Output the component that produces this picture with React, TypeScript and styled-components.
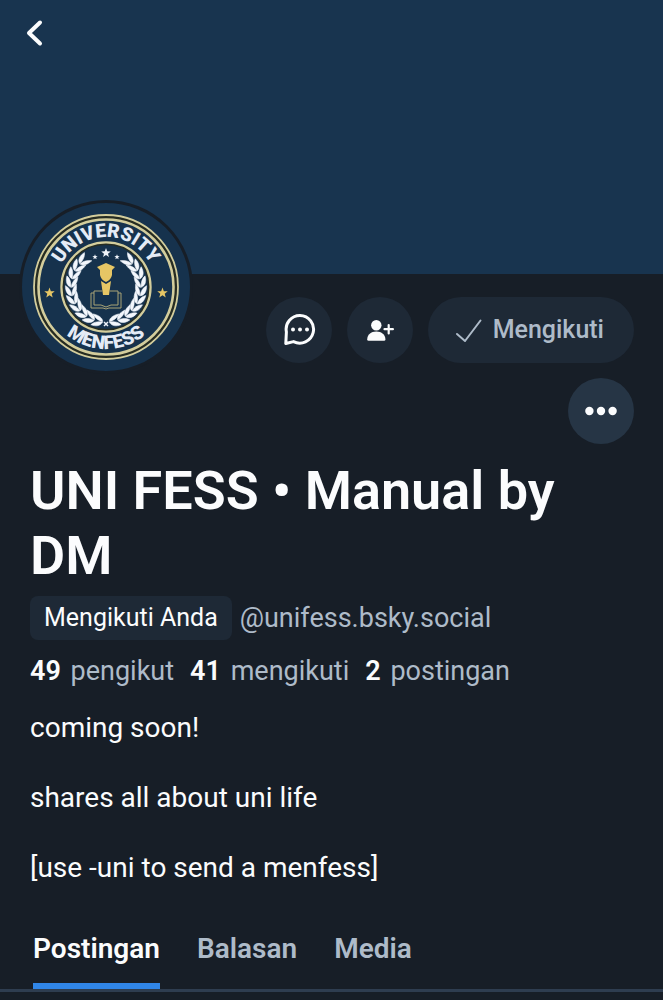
import React from "react";
import styled, { createGlobalStyle } from "styled-components";

const color = {
  bg: "#171e27",
  banner: "#18344f",
  avatar: "#16324d",
  surface: "#1e2936",
  surfaceStrong: "#263545",
  text: "#fbfcfd",
  muted: "#aebbc9",
  border: "#2e3d50",
  accent: "#3086e8",
  gold: "#e6c665",
  ring: "#d3cd9c",
};

const GlobalStyle = createGlobalStyle`
  *, *::before, *::after { box-sizing: border-box; }
  body {
    margin: 0;
    background: ${color.bg};
    color: ${color.text};
    font-family: Roboto, "Liberation Sans", sans-serif;
  }
`;

const Page = styled.main`
  min-height: 100vh;
  background: ${color.bg};
`;

const Banner = styled.header`
  height: 274px;
  padding: 12px 14px;
  background: ${color.banner};
`;

const BackButton = styled.button`
  display: grid;
  place-items: center;
  width: 42px;
  height: 42px;
  padding: 0;
  border: 0;
  background: none;
  color: ${color.text};
`;

const ProfileTop = styled.div`
  display: flex;
  align-items: flex-start;
  padding: 0 29px 0 19px;
`;

const Avatar = styled.div`
  flex: none;
  width: 174px;
  height: 174px;
  margin-top: -74px;
  border: 3px solid ${color.bg};
  border-radius: 50%;
  background: ${color.avatar};
  overflow: hidden;

  svg { display: block; }
`;

const Actions = styled.div`
  flex: 1;
  display: flex;
  flex-wrap: wrap;
  justify-content: flex-end;
  gap: 15px;
  padding-top: 23px;
`;

const RoundButton = styled.button<{ $strong?: boolean }>`
  display: grid;
  place-items: center;
  width: 66px;
  height: 66px;
  padding: 0;
  border: 0;
  border-radius: 50%;
  background: ${(p) => (p.$strong ? color.surfaceStrong : color.surface)};
  color: ${color.text};
`;

const FollowButton = styled.button`
  display: flex;
  align-items: center;
  gap: 11px;
  height: 66px;
  padding: 0 30px 0 27px;
  border: 0;
  border-radius: 33px;
  background: ${color.surface};
  color: ${color.muted};
  font: 500 25px/32px Roboto, "Liberation Sans", sans-serif;
`;

const Details = styled.section`
  padding: 14px 30px 0;
`;

const Name = styled.h1`
  margin: 0;
  font-size: 54px;
  line-height: 65px;
  font-weight: 600;
`;

const HandleRow = styled.div`
  display: flex;
  align-items: center;
  gap: 8px;
  margin-top: 8px;
`;

const FollowsYou = styled.span`
  padding: 4px 14px;
  border-radius: 8px;
  background: ${color.surface};
  font-size: 25px;
  line-height: 36px;
`;

const Handle = styled.span`
  color: ${color.muted};
  font-size: 27px;
  line-height: 36px;
`;

const Stats = styled.div`
  display: flex;
  gap: 16px;
  margin-top: 13px;
  font-size: 27px;
  line-height: 36px;
`;

const Stat = styled.a`
  color: ${color.muted};
  text-decoration: none;

  strong {
    margin-right: 3px;
    color: ${color.text};
    font-weight: 600;
  }
`;

const Bio = styled.p`
  margin: 21px 0 0;
  font-size: 28px;
  line-height: 35px;
  white-space: pre-line;
`;

const Tabs = styled.nav`
  display: flex;
  gap: 37px;
  margin-top: 36px;
  padding: 0 33px;
  border-bottom: 3px solid ${color.border};
`;

const Tab = styled.button<{ $active?: boolean }>`
  padding: 10px 0 16px;
  border: 0;
  border-bottom: 6px solid ${(p) => (p.$active ? color.accent : "transparent")};
  background: none;
  color: ${(p) => (p.$active ? color.text : color.muted)};
  font: 600 28px/36px Roboto, "Liberation Sans", sans-serif;
`;

const star = (cx: number, cy: number, r: number) =>
  Array.from({ length: 10 }, (_, i) => {
    const a = (i * Math.PI) / 5 - Math.PI / 2;
    const q = i % 2 ? r * 0.42 : r;
    return `${cx + q * Math.cos(a)},${cy + q * Math.sin(a)}`;
  }).join(" ");

const leafAngles = [-42, -56, -70, -84, -98, -112, -126, -140, -154, -168];

const Laurel = () => (
  <g fill="#f3f7fd" stroke="#f3f7fd" strokeWidth="0.5">
    {leafAngles.map((a) => (
      <g key={a} transform={`rotate(${a}) translate(0 -35)`}>
        <path d="M-4 0 C-3 -4 1 -6 7 -5 C5 -2 1 0 -4 0Z" />
        <path d="M-4 0.6 C-1 0 4 2 7 6 C1 6 -3 4 -4 0.6Z" />
      </g>
    ))}
  </g>
);

const Emblem = () => (
  <svg width="168" height="168" viewBox="-84 -84 168 168" role="img" aria-label="University Menfess">
    <defs>
      <path id="arcTop" d="M-50 0 A50 50 0 0 1 50 0" />
      <path id="arcBottom" d="M-62 0 A62 62 0 0 0 62 0" />
    </defs>
    <g fill="none">
      <circle r="69.5" stroke="#262c22" strokeWidth="5" />
      <circle r="72" stroke={color.ring} strokeWidth="1.8" />
      <circle r="67.5" stroke={color.ring} strokeWidth="2.6" />
      <circle r="43" stroke="#262c22" strokeWidth="2" />
      <circle r="44.6" stroke={color.ring} strokeWidth="2.2" />
    </g>
    <g fill="#e4ebf6" fontFamily="Roboto, sans-serif" fontSize="19" fontWeight="900" textAnchor="middle">
      <text><textPath href="#arcTop" startOffset="50%">UNIVERSITY</textPath></text>
      <text><textPath href="#arcBottom" startOffset="50%">MENFESS</textPath></text>
    </g>
    <g fill={color.gold}>
      <polygon points={star(-56.5, 6, 5.5)} />
      <polygon points={star(56.5, 6, 5.5)} />
      <path d="M-9 -20 L0 -24 L9 -20 L6 -17 V-12 Q5 -7 0 -5 Q-5 -7 -6 -12 V-17Z" />
      <path d="M-5 -6 L0 -3 L5 -6 L3 8 H-3Z" />
    </g>
    <path
      d="M-12 6 H-15 V21 H-3 Q0 23 3 21 H15 V6 H12 M-4 4 H-12 V18 Q-4 17 0 20 Q4 17 12 18 V4 H4"
      fill="none"
      stroke="#a9a377"
      strokeWidth="1"
    />
    <g fill="#eef3fa">
      <polygon points={star(0, -34, 5)} />
      <polygon points={star(-11, -30, 2.8)} />
      <polygon points={star(11, -30, 2.8)} />
    </g>
    <Laurel />
    <g transform="scale(-1 1)"><Laurel /></g>
    <path d="M-2 35 L2 39 M2 35 L-2 39" stroke="#eef3fa" strokeWidth="1.5" />
  </svg>
);

const BackIcon = () => (
  <svg width="24" height="30" viewBox="0 0 24 30" fill="none" stroke="currentColor" strokeWidth="4" strokeLinecap="round" strokeLinejoin="round">
    <path d="M17 4.5 L6 15 L17 25.5" />
  </svg>
);

const MessageIcon = () => (
  <svg width="34" height="34" viewBox="0 0 34 34">
    <path
      d="M18 2.5 A13.8 13.8 0 1 1 11.5 28.6 L3.8 30.5 L4.4 19 A13.8 13.8 0 0 1 18 2.5Z"
      fill="none"
      stroke="currentColor"
      strokeWidth="3"
      strokeLinejoin="round"
    />
    <g fill="currentColor">
      <circle cx="11" cy="16.5" r="2" />
      <circle cx="18" cy="16.5" r="2" />
      <circle cx="25" cy="16.5" r="2" />
    </g>
  </svg>
);

const AddUserIcon = () => (
  <svg width="32" height="32" viewBox="0 0 32 32">
    <circle cx="12.3" cy="11.3" r="5.2" fill="currentColor" />
    <path d="M3.2 25.4 C3.2 20.5 7 17.4 12.3 17.4 C17.6 17.4 21.4 20.5 21.4 25.4 Q21.4 26.8 20 26.8 H4.6 Q3.2 26.8 3.2 25.4Z" fill="currentColor" />
    <path d="M24.7 11 V19.4 M20.5 15.2 H28.9" stroke="currentColor" strokeWidth="2.2" strokeLinecap="round" />
  </svg>
);

const CheckIcon = () => (
  <svg width="27" height="27" viewBox="0 0 27 27" fill="none" stroke="currentColor" strokeWidth="2" strokeLinecap="round" strokeLinejoin="round">
    <path d="M2 17 L10 24 L25.5 3.5" />
  </svg>
);

const MoreIcon = () => (
  <svg width="34" height="10" viewBox="0 0 34 10" fill="currentColor">
    <circle cx="5.4" cy="5" r="4.2" />
    <circle cx="17" cy="5" r="4.2" />
    <circle cx="28.6" cy="5" r="4.2" />
  </svg>
);

const stats = [
  { count: 49, label: "pengikut" },
  { count: 41, label: "mengikuti" },
  { count: 2, label: "postingan" },
];

const tabs = ["Postingan", "Balasan", "Media"];

export default function App() {
  return (
    <>
      <GlobalStyle />
      <Page>
        <Banner>
          <BackButton aria-label="Kembali"><BackIcon /></BackButton>
        </Banner>
        <ProfileTop>
          <Avatar><Emblem /></Avatar>
          <Actions>
            <RoundButton aria-label="Pesan"><MessageIcon /></RoundButton>
            <RoundButton aria-label="Tambah"><AddUserIcon /></RoundButton>
            <FollowButton><CheckIcon />Mengikuti</FollowButton>
            <RoundButton $strong aria-label="Lainnya"><MoreIcon /></RoundButton>
          </Actions>
        </ProfileTop>
        <Details>
          <Name>UNI FESS • Manual by DM</Name>
          <HandleRow>
            <FollowsYou>Mengikuti Anda</FollowsYou>
            <Handle>@unifess.bsky.social</Handle>
          </HandleRow>
          <Stats>
            {stats.map((s) => (
              <Stat key={s.label} href={`#${s.label}`}>
                <strong>{s.count}</strong> {s.label}
              </Stat>
            ))}
          </Stats>
          <Bio>{"coming soon!\n\nshares all about uni life\n\n[use -uni to send a menfess]"}</Bio>
        </Details>
        <Tabs>
          {tabs.map((t, i) => (
            <Tab key={t} $active={i === 0}>{t}</Tab>
          ))}
        </Tabs>
      </Page>
    </>
  );
}
